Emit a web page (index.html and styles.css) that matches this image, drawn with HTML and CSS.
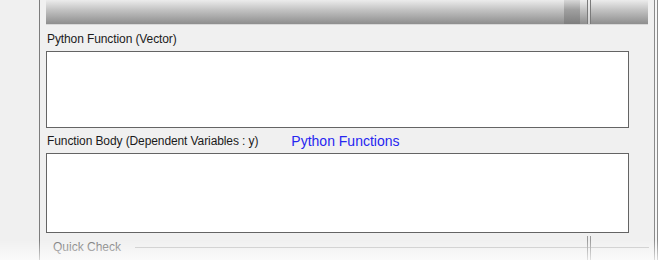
FILE: index.html
```html
<!DOCTYPE html>
<html>
<head>
<meta charset="utf-8">
<link rel="stylesheet" href="styles.css">
</head>
<body>
<div class="frame">
  <div class="left-strip"></div>
  <div class="main">
    <div class="top-bar">
      <div class="bar-fill"></div>
      <div class="bar-thumb"></div>
      <div class="bar-gap"></div>
      <div class="bar-split"></div>
      <div class="bar-rest"></div>
    </div>
    <div class="field-label">Python Function (Vector)</div>
    <div class="textbox"></div>
    <div class="field-label row">
      <span>Function Body (Dependent Variables : y)</span>
      <span class="link">Python Functions</span>
    </div>
    <div class="textbox"></div>
    <div class="group-head">
      <span class="group-title">Quick Check</span>
      <span class="group-line"></span>
    </div>
  </div>
  <div class="right-edge"></div>
</div>
<div class="seam"></div>
<div class="fade"></div>
</body>
</html>
```
FILE: styles.css
```css
html, body {
  margin: 0;
  padding: 0;
  background: #ffffff;
}
body {
  width: 662px;
  height: 260px;
  overflow: hidden;
  position: relative;
  font-family: "Liberation Sans", Arial, sans-serif;
}
.frame {
  display: flex;
  height: 260px;
}
.left-strip {
  width: 39px;
  background: #f0f0f0;
  border-right: 1px solid #7c7c7c;
  flex: none;
}
.main {
  width: 608px;
  padding-left: 6px;
  background: #f0f0f0;
  display: flex;
  flex-direction: column;
  flex: none;
}
.top-bar {
  height: 25px;
  width: 602px;
  display: flex;
  flex: none;
  border-bottom: 1px solid #d8d8d8;
  box-sizing: border-box;
}
.bar-fill, .bar-gap, .bar-rest {
  background: linear-gradient(#ececec, #c4c4c4 40%, #8e8e8e);
}
.bar-fill { width: 518px; }
.bar-thumb {
  width: 16px;
  background: linear-gradient(#d8d8d8, #a0a0a0 40%, #7e7e7e);
}
.bar-gap { width: 7px; }
.bar-split {
  width: 4px;
  border-left: 1px solid #7a7a7a;
  border-right: 1px solid #7a7a7a;
  box-sizing: border-box;
  background: linear-gradient(#eeeeee, #d0d0d0);
}
.bar-rest { flex: 1; }
.field-label {
  font-size: 12px;
  line-height: 16px;
  color: #1b1b1b;
  margin-top: 6px;
  margin-left: 1px;
  letter-spacing: -0.1px;
}
.field-label.row {
  display: flex;
  align-items: center;
  gap: 33px;
  margin-top: 5px;
}
.link {
  font-size: 14px;
  color: #2626f0;
  letter-spacing: 0;
}
.textbox {
  width: 583px;
  height: 77px;
  box-sizing: border-box;
  margin-top: 4px;
  border: 1px solid #646464;
  background: #ffffff;
  flex: none;
}
.textbox + .field-label.row + .textbox {
  height: 80px;
}
.group-head {
  display: flex;
  align-items: center;
  margin-top: 6px;
  padding-left: 7px;
  gap: 14px;
}
.group-title {
  font-size: 12px;
  line-height: 16px;
  color: #787878;
}
.group-line {
  width: 514px;
  height: 1px;
  background: #c4c4c4;
}
.right-edge {
  width: 2px;
  border-left: 1px solid #8a8a8a;
  border-right: 1px solid #8a8a8a;
  background: #f6f6f6;
  flex: none;
}
.seam {
  position: absolute;
  left: 587px;
  top: 236px;
  width: 2px;
  height: 24px;
  border-left: 1px solid #9a9a9a;
  border-right: 1px solid #9a9a9a;
}
.fade {
  position: absolute;
  left: 0;
  top: 0;
  width: 662px;
  height: 260px;
  pointer-events: none;
  background: linear-gradient(rgba(255,255,255,0) 240px, rgba(255,255,255,0.7) 260px);
}
```
